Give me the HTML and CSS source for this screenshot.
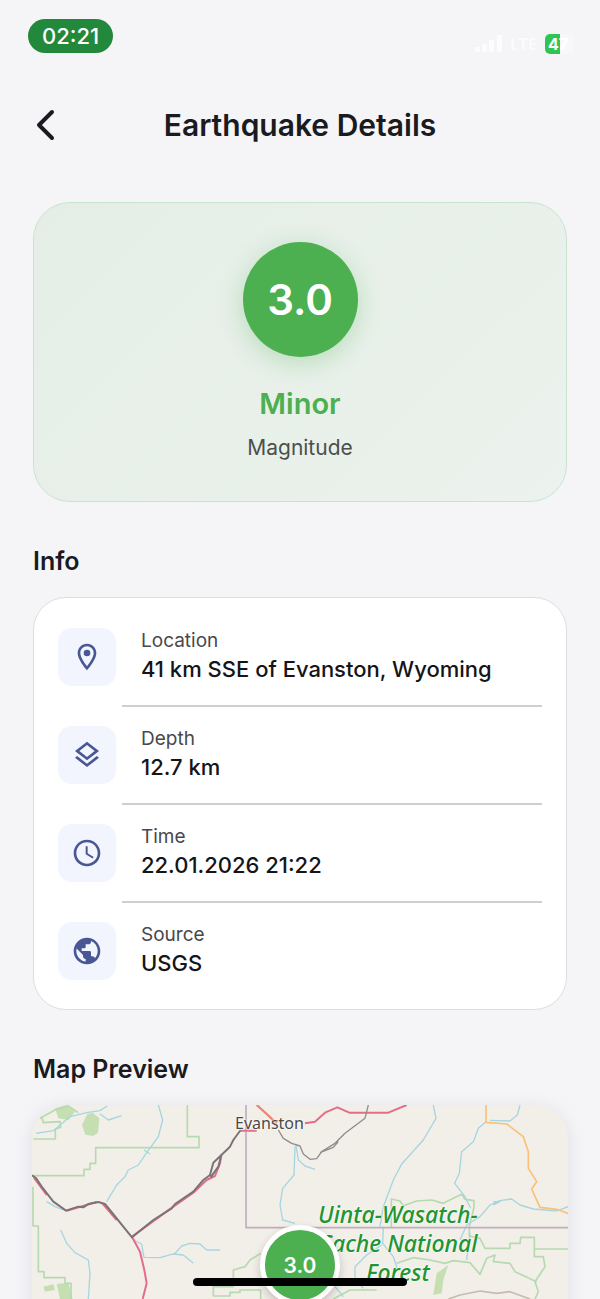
FILE: index.html
```html
<!DOCTYPE html>
<html lang="en">
<head>
<meta charset="utf-8">
<meta name="viewport" content="width=device-width, initial-scale=1">
<title>Earthquake Details</title>
<link rel="stylesheet" href="styles.css">
</head>
<body>
<div class="screen">
  <div class="status">
    <span class="clock">02:21</span>
    <div class="signals">
      <svg class="bars" viewBox="0 0 28 18" aria-hidden="true"><rect x="0" y="12" width="5" height="5" rx="1"/><rect x="7" y="9" width="5" height="8" rx="1"/><rect x="14" y="5" width="5" height="12" rx="1"/><rect x="22" y="0" width="5" height="17" rx="1"/></svg>
      <span class="network">LTE</span>
      <span class="battery">47</span>
    </div>
  </div>

  <header class="topbar">
    <button class="back" type="button" aria-label="Back">
      <svg viewBox="0 0 20 32" aria-hidden="true"><path d="M17 3 4 16 17 29"/></svg>
    </button>
    <h1 class="title">Earthquake Details</h1>
  </header>

  <main class="content">
    <section class="hero">
      <div class="magnitude">3.0</div>
      <p class="severity">Minor</p>
      <p class="caption">Magnitude</p>
    </section>

    <h2 class="heading">Info</h2>
    <ul class="info">
      <li class="row">
        <span class="tile"><svg viewBox="0 0 24 24" aria-hidden="true"><path d="M12 2C8.130 2 5 5.130 5 9c0 5.250 7 13 7 13s7-7.750 7-13c0-3.870-3.130-7-7-7zM7 9c0-2.760 2.240-5 5-5s5 2.240 5 5c0 2.880-2.880 7.190-5 9.880C9.920 16.210 7 11.850 7 9z"/><circle cx="12" cy="9" r="2.500"/></svg></span>
        <div class="text"><span class="label">Location</span><span class="value">41 km SSE of Evanston, Wyoming</span></div>
      </li>
      <li class="row">
        <span class="tile"><svg viewBox="0 0 24 24" aria-hidden="true"><path d="M11.990 18.540 4.620 12.810 3 14.070l9 7 9-7-1.630-1.270zM12 16l7.360-5.730L21 9l-9-7-9 7 1.630 1.270zm0-11.470L17.740 9 12 13.470 6.260 9z"/></svg></span>
        <div class="text"><span class="label">Depth</span><span class="value">12.7 km</span></div>
      </li>
      <li class="row">
        <span class="tile"><svg viewBox="0 0 24 24" aria-hidden="true"><path d="M11.990 2C6.470 2 2 6.480 2 12s4.470 10 9.990 10C17.520 22 22 17.520 22 12S17.520 2 11.990 2zM12 20c-4.420 0-8-3.580-8-8s3.580-8 8-8 8 3.580 8 8-3.580 8-8 8zm.5-13H11v6l5.250 3.150.75-1.230-4.500-2.670z"/></svg></span>
        <div class="text"><span class="label">Time</span><span class="value">22.01.2026 21:22</span></div>
      </li>
      <li class="row">
        <span class="tile"><svg viewBox="0 0 24 24" aria-hidden="true"><path d="M12 2C6.480 2 2 6.480 2 12s4.480 10 10 10 10-4.480 10-10S17.520 2 12 2zm-1 17.930c-3.950-.49-7-3.850-7-7.930 0-.62.080-1.210.21-1.790L9 15v1c0 1.100.9 2 2 2v1.930zm6.900-2.540c-.26-.81-1-1.390-1.900-1.390h-1v-3c0-.55-.45-1-1-1H8v-2h2c.55 0 1-.45 1-1V7h2c1.100 0 2-.9 2-2v-.41c2.930 1.190 5 4.060 5 7.410 0 2.080-.8 3.970-2.100 5.390z"/></svg></span>
        <div class="text"><span class="label">Source</span><span class="value">USGS</span></div>
      </li>
    </ul>

    <h2 class="heading">Map Preview</h2>
    <section class="map" aria-label="Map preview">
      <svg class="tiles" viewBox="96 45 1608 960" preserveAspectRatio="xMidYMin slice" aria-hidden="true">
        <g class="woods">
          <path d="M165 55 200 45 225 65 205 90 175 85Z"/>
          <path d="M262 72 278 68 298 85 294 128 280 138 256 134 246 105Z"/>
          <path d="M170 582 205 578 218 627 180 627Z"/>
          <path d="M130 590 160 583 165 600 135 605Z"/>
          <path d="M1310 550 1345 525 1330 570 1325 610 1300 615Z"/>
        </g>
        <g class="bounds">
          <path d="M120 85 165 60 205 48 235 68M125 80 130 98 180 95 182 112 166 118V147H100"/>
          <path d="M562 45V140H597V173H287V220H270V238H252V257H96"/>
          <path d="M99 290V408H115V545H132V563H195V580H213V627"/>
          <path d="M782 627V600H720V607H690V618H640V590H700V540L735 530 750 510 782 490"/>
          <path d="M1174 412V327L1200 333 1210 347 1250 333 1295 330 1330 340 1360 325 1385 313 1395 328 1422 332V352L1408 410V438L1440 445 1455 475H1530V460H1560L1562 442H1603V500H1630L1635 530 1605 575 1615 605 1605 627M1603 477H1704"/>
          <path d="M1190 520 1240 503 1290 510 1335 520 1360 512 1410 518 1440 553 1460 505 1485 495 1480 515 1530 520 1545 545 1610 575M1000 627 1050 600 1130 600"/>
        </g>
        <path class="trail" d="M1345 627 1380 615 1440 603 1490 610 1530 605 1590 627"/>
        <g class="water">
          <path d="M108 130 160 122 210 80 260 68 300 62 322 48M300 72 325 90 365 77"/>
          <path d="M475 45 488 90 475 140 440 188 415 225 385 240 375 260 350 285 320 335M432 180 450 192"/>
          <path d="M140 335 165 350 190 360M182 420 200 460 225 488 265 510 270 550 265 627"/>
          <path d="M400 450 425 462 432 502 480 503 525 490 545 468 570 460 600 462 620 480 660 480M520 492 550 495 580 520"/>
          <path d="M885 170 882 255 848 295 840 345 848 390 885 400M888 165 895 210 915 228 945 238"/>
          <path d="M1300 45 1308 85 1270 150 1205 222 1180 270 1150 350 1140 410M1150 410 1148 460 1180 500 1190 530 1180 560M1145 465 1100 495 1065 530 1065 570 1090 595M1005 590 1030 620"/>
          <path d="M1458 95 1435 115 1420 155 1385 185 1378 250 1364 280 1395 320 1412 355M1410 430 1400 510M1470 91 1530 93 1552 75 1560 45M1380 450 1400 405 1440 380 1470 345 1500 332 1535 327 1560 345 1600 357 1670 363 1704 350M1480 345 1500 335 1480 335"/>
        </g>
        <path class="state" d="M738 45V413H1704"/>
        <path class="motorway" d="M770 45 800 72 830 100"/>
        <path class="primary" d="M915 100 945 95 975 68 1012 52 1048 68H1165L1220 45M720 122H770M664 195 660 220 645 258 620 270 580 308 520 350 396 440M396 440 420 485 433 540 440 580 428 627M305 338 350 390M101 262 140 315M200 362 290 336"/>
        <path class="rail" d="M96 256 108 264 125 290 160 335 198 362 235 350 250 352 265 342 295 336 315 342 396 442 460 390 515 355 525 342 580 305 610 270 630 255 640 218 690 170 700 150 722 120M664 195 655 230 632 262"/>
        <path class="rail thin" d="M835 120 850 145 875 160 900 168 910 192 930 208 950 206 965 185 1005 160 1035 130 1095 85 1105 45M960 188 1000 172 1015 155M900 95H907V112"/>
        <path class="road" d="M1458 45V97L1520 102 1570 140 1585 185V235L1610 275 1595 297 1620 352 1670 358 1725 378"/>
      </svg>
      <span class="town">Evanston</span>
      <span class="forest">Uinta-Wasatch-<br>Cache National<br>Forest</span>
      <span class="pin">3.0</span>
    </section>
  </main>
  <div class="home-indicator"></div>
</div>
</body>
</html>
```
FILE: styles.css
```css
* { box-sizing: border-box; }

body {
  margin: 0;
  background: #f5f5f8;
  color: #1b1b1f;
  font-family: Inter, "Liberation Sans", sans-serif;
}

h1, h2, p, ul { margin: 0; padding: 0; }

.screen {
  position: relative;
  height: 100vh;
  overflow: hidden;
}

.status {
  display: flex;
  justify-content: space-between;
  align-items: flex-start;
  padding: 19px 26px 0 28px;
}

.clock {
  padding: 0 14px;
  border-radius: 17px;
  background: #22883b;
  color: #fff;
  font-size: 22px;
  font-weight: 500;
  line-height: 34px;
}

.signals {
  display: flex;
  align-items: center;
  gap: 7px;
  padding-top: 15px;
  color: #fff;
}

.bars { width: 28px; height: 18px; fill: #fcfcfd; }

.network { font-size: 16px; font-weight: 500; line-height: 20px; color: #fcfcfd; }

.battery {
  width: 29px;
  padding-left: 3px;
  border-radius: 5px;
  background: linear-gradient(90deg, #30c552 15px, #f8f8fa 15px);
  font-size: 16px;
  font-weight: 700;
  line-height: 20px;
}

.topbar {
  display: grid;
  grid-template-columns: 40px 1fr 40px;
  align-items: center;
  padding: 51px 33px 57px;
}

.back {
  display: flex;
  padding: 0 2px;
  border: 0;
  background: none;
}

.back svg {
  width: 20px;
  height: 32px;
  fill: none;
  stroke: #1b1b1f;
  stroke-width: 4;
  stroke-linecap: round;
  stroke-linejoin: round;
}

.title {
  text-align: center;
  font-size: 30px;
  font-weight: 600;
  line-height: 40px;
}

.content { padding: 0 33px; }

.hero {
  display: flex;
  flex-direction: column;
  align-items: center;
  padding: 39px 24px;
  border: 1px solid #c8e4cf;
  border-radius: 37px;
  background: linear-gradient(135deg, #e4eee6, #ecf2ed);
}

.magnitude {
  width: 115px;
  height: 115px;
  margin-bottom: 28px;
  border-radius: 50%;
  background: #4caf50;
  box-shadow: 0 6px 24px rgba(76, 175, 80, 0.3);
  color: #fff;
  text-align: center;
  font-size: 42px;
  font-weight: 600;
  line-height: 115px;
}

.severity {
  margin-bottom: 11px;
  color: #4caf50;
  font-size: 29px;
  font-weight: 600;
  line-height: 38px;
}

.caption { color: #4b4f4e; font-size: 21px; line-height: 28px; }

.heading {
  padding: 43px 0 20px;
  font-size: 25px;
  font-weight: 600;
  line-height: 32px;
}

.info {
  padding: 11px 24px 8px;
  border: 1px solid #dedee1;
  border-radius: 33px;
  background: #fff;
  list-style: none;
}

.row {
  display: grid;
  grid-template-columns: 58px 1fr;
  gap: 0 25px;
  align-items: center;
  padding-top: 19px;
}

.row::after {
  content: "";
  grid-column: 1 / -1;
  height: 2px;
  margin-top: 19px;
  margin-left: 64px;
  background: #cfcfd3;
}

.row:last-child::after { background: none; }

.tile {
  display: flex;
  align-items: center;
  justify-content: center;
  height: 58px;
  border-radius: 14px;
  background: #f2f5fe;
}

.tile svg { width: 32px; height: 32px; fill: #4a5795; }

.text { display: flex; flex-direction: column; padding-bottom: 2px; }

.label { color: #48484d; font-size: 19px; line-height: 26px; }

.value { color: #151518; font-size: 22px; font-weight: 500; line-height: 30px; }

.map {
  position: relative;
  margin: 0 -1px;
  height: 320px;
  border-radius: 33px;
  background: #f2efe9;
  box-shadow: 0 4px 20px rgba(30, 30, 60, 0.1);
  overflow: hidden;
}

.tiles {
  display: block;
  width: 100%;
  height: 100%;
  fill: none;
  stroke-linejoin: round;
}

.woods { fill: #c5dfb3; }
.bounds { stroke: #b7d9b0; stroke-width: 5; }
.water { stroke: #a6d5e1; stroke-width: 4; }
.trail { stroke: #c5bcaf; stroke-width: 5; }
.state { stroke: #c0aebe; stroke-width: 5; }
.motorway { stroke: #ee8374; stroke-width: 7; }
.primary { stroke: #e36d8b; stroke-width: 6; }
.rail { stroke: #7c7376; stroke-width: 6; }
.thin { stroke: #908d8c; stroke-width: 4; }
.road { stroke: #f8c177; stroke-width: 5; }

.town, .forest {
  position: absolute;
  font-family: "Noto Sans", "Open Sans", sans-serif;
  text-shadow: 0 0 2px #fff, 0 0 2px #fff;
}

.town {
  left: 203px;
  top: 8px;
  color: #4b4948;
  font-size: 16px;
  line-height: 20px;
}

.forest {
  left: 286px;
  top: 95px;
  color: #219533;
  text-align: center;
  font-size: 23px;
  font-style: italic;
  font-weight: 500;
  line-height: 29px;
}

.pin {
  position: absolute;
  left: calc(50% - 40px);
  top: 120px;
  width: 80px;
  height: 80px;
  border: 5px solid #fff;
  border-radius: 50%;
  background: #4caf50;
  box-shadow: 0 4px 10px rgba(0, 0, 0, 0.2);
  color: #fff;
  text-align: center;
  font-size: 21px;
  font-weight: 600;
  line-height: 72px;
}

.home-indicator {
  position: absolute;
  bottom: 13px;
  left: 50%;
  width: 214px;
  height: 8px;
  margin-left: -107px;
  border-radius: 4px;
  background: #000;
}
```
